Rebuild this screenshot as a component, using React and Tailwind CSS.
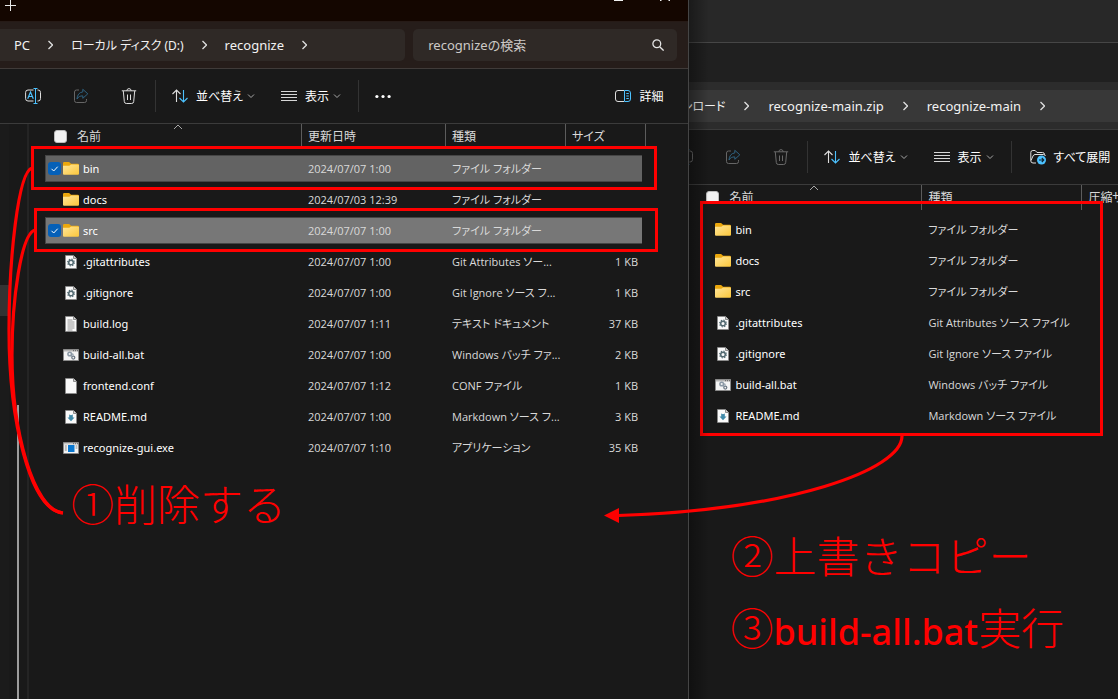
import React from "react";

const leftFiles = [
  { icon: "folder", name: "bin", date: "2024/07/07 1:00", kind: "ファイル フォルダー", size: "", tone: "bg-[#636363]" },
  { icon: "folder", name: "docs", date: "2024/07/03 12:39", kind: "ファイル フォルダー", size: "" },
  { icon: "folder", name: "src", date: "2024/07/07 1:00", kind: "ファイル フォルダー", size: "", tone: "bg-[#777777]" },
  { icon: "gear", name: ".gitattributes", date: "2024/07/07 1:00", kind: "Git Attributes ソー...", size: "1 KB" },
  { icon: "gear", name: ".gitignore", date: "2024/07/07 1:00", kind: "Git Ignore ソース フ...", size: "1 KB" },
  { icon: "text", name: "build.log", date: "2024/07/07 1:11", kind: "テキスト ドキュメント", size: "37 KB" },
  { icon: "bat", name: "build-all.bat", date: "2024/07/07 1:00", kind: "Windows バッチ ファ...", size: "2 KB" },
  { icon: "blank", name: "frontend.conf", date: "2024/07/07 1:12", kind: "CONF ファイル", size: "1 KB" },
  { icon: "markdown", name: "README.md", date: "2024/07/07 1:00", kind: "Markdown ソース フ...", size: "3 KB" },
  { icon: "exe", name: "recognize-gui.exe", date: "2024/07/07 1:10", kind: "アプリケーション", size: "35 KB" },
];

const rightFiles = [
  { icon: "folder", name: "bin", kind: "ファイル フォルダー" },
  { icon: "folder", name: "docs", kind: "ファイル フォルダー" },
  { icon: "folder", name: "src", kind: "ファイル フォルダー" },
  { icon: "gear", name: ".gitattributes", kind: "Git Attributes ソース ファイル" },
  { icon: "gear", name: ".gitignore", kind: "Git Ignore ソース ファイル" },
  { icon: "bat", name: "build-all.bat", kind: "Windows バッチ ファイル" },
  { icon: "markdown", name: "README.md", kind: "Markdown ソース ファイル" },
];

function Page({ short, children }) {
  return (
    <>
      <path d={short ? "M2.5 1.5h8l3 3v10h-11z" : "M2.5 .5h8l3 3v12h-11z"} fill="#fafafa" stroke="#8d8d8d" strokeWidth=".7" />
      <path d={short ? "M10.5 1.5v3h3" : "M10.5 .5v3h3"} fill="#d0d0d0" stroke="#777" strokeWidth=".8" />
      {children}
    </>
  );
}

function FileIcon({ type }) {
  return (
    <svg viewBox="0 0 16 16" className="size-4 shrink-0" aria-hidden="true">
      {type === "folder" && (
        <>
          <defs>
            <linearGradient id="folderFront" x1="0" y1="0" x2="1" y2="1">
              <stop offset="0" stopColor="#ffe69a" />
              <stop offset="1" stopColor="#fbc63a" />
            </linearGradient>
          </defs>
          <path d="M0 2.2Q0 1 1.2 1h4.6q.6 0 1 .4L8 2.7h6.8Q16 2.7 16 4v4H0z" fill="#eba70c" />
          <path d="M0 4.7h6.2q.5 0 .9-.4l.9-.9h7q1 0 1 1v8.400q0 1-1 1H1q-1 0-1-1z" fill="url(#folderFront)" />
        </>
      )}
      {type === "gear" && (
        <Page short>
          <circle cx="8" cy="8.5" r="2.3" fill="none" stroke="#536a72" strokeWidth="1.5" />
          <circle cx="8" cy="8.5" r="3.4" fill="none" stroke="#536a72" strokeWidth="1.1" strokeDasharray="1.35 1.32" />
        </Page>
      )}
      {type === "text" && (
        <Page>
          <path d="M4.5 4h5M4.5 6h7M4.5 8h7M4.5 10h7M4.5 12h7M4.5 14h5" stroke="#8a8a8a" strokeWidth=".9" />
        </Page>
      )}
      {type === "blank" && <Page />}
      {type === "markdown" && (
        <Page short>
          <path d="M6.2 5.500l1.800.8 1.800-.8v3h1.700L8 12.300 4.500 8.500h1.700z" fill="#3f89a8" />
        </Page>
      )}
      {type === "bat" && (
        <>
          <path d="M.5 2.5h15v11H.5z" fill="#f4f4f4" stroke="#8a8a8a" />
          <path d="M1 3h14v1.500H1z" fill="#b5b5b5" />
          <path d="M10 3.7h1M12 3.7h1M14 3.7h1" stroke="#555" strokeWidth=".9" />
          <circle cx="6.7" cy="7" r="1.8" fill="none" stroke="#8a98a5" strokeWidth="1.5" />
          <circle cx="10.3" cy="10.6" r="1.5" fill="none" stroke="#6e7a86" strokeWidth="1.3" />
          <path d="M8 8.300l1.300 1.300M9.500 6.500l.8 2" stroke="#8a98a5" strokeWidth="1.2" />
        </>
      )}
      {type === "exe" && (
        <>
          <path d="M.5 2.5h15v11H.5z" fill="#f4f4f4" stroke="#8a8a8a" />
          <path d="M1 3h14v1.500H1z" fill="#c4c4c4" />
          <path d="M10 3.7h1M12 3.7h1M14 3.7h1" stroke="#555" strokeWidth=".9" />
          <path d="M5 5h6.500v7H5z" fill="#0b78d0" />
          <path d="M1.800 6h2M1.800 8h2M1.800 10h2M12.600 6h1.800M12.600 8h1.800" stroke="#777" strokeWidth=".9" />
        </>
      )}
    </svg>
  );
}

function RenameIcon() {
  return (
    <svg viewBox="0 0 16 16" className="size-4" fill="none" aria-hidden="true">
      <path d="M8.500 2H3Q.6 2 .6 4.400v6.200Q.6 13 3 13h5.500M12.500 2h.6q2.400 0 2.400 2.400v6.200q0 2.400-2.400 2.400h-.6" stroke="#dedede" />
      <path d="M10.500 .5v15M8.500 .5h4M8.500 15.500h4" stroke="#4cc2ff" />
      <path d="M2.700 10.700L5.500 4l2.800 6.700M3.700 8.500h3.600" stroke="#4cc2ff" strokeWidth="1.2" />
    </svg>
  );
}

function ShareIcon() {
  return (
    <svg viewBox="0 0 16 16" className="size-4" fill="none" aria-hidden="true">
      <path d="M6 2H3.500Q1.500 2 1.500 4v8.500q0 2 2 2h8q2 0 2-2V11" stroke="#666" />
      <path d="M9.800 1.300l5 4.500-5 4.500V7.900C7 7.800 5.300 8.800 4 11c.2-4 2.200-6.700 5.800-7.100z" stroke="#2f6280" strokeLinejoin="round" />
    </svg>
  );
}

function TrashIcon() {
  return (
    <svg viewBox="0 0 16 16" className="size-4" fill="none" stroke="currentColor" aria-hidden="true">
      <path d="M.8 2.800h14.400M5.800 2.800Q6 .6 8 .6t2.200 2.200M2.300 3l1 10.500q.2 2 2 2h5.400q1.800 0 2-2l1-10.500M6.500 6.500v5.500M9.500 6.500v5.500" />
    </svg>
  );
}

function SortIcon() {
  return (
    <svg viewBox="0 0 16 16" className="size-4" fill="none" strokeWidth="1.1" aria-hidden="true">
      <path d="M4.500 14V2.200M.5 6l4-4 4 4" stroke="#dedede" />
      <path d="M11.500 2v11.800M7.500 10l4 4 4-4" stroke="#4cc2ff" />
    </svg>
  );
}

function ListIcon() {
  return (
    <svg viewBox="0 0 16 16" className="size-4" stroke="#d6d6d6" aria-hidden="true">
      <path d="M0 3.500h16M0 6.500h16M0 9.500h16M0 12.500h16" />
    </svg>
  );
}

function ChevronDown() {
  return (
    <svg viewBox="0 0 8 8" className="-ml-1 size-2" fill="none" stroke="#a8a8a8" aria-hidden="true">
      <path d="M1 2.500l3 3 3-3" />
    </svg>
  );
}

function ChevronRight() {
  return (
    <svg viewBox="0 0 5 10" className="h-2.5 w-[5px] shrink-0" fill="none" stroke="#e0e0e0" strokeWidth="1.3" aria-hidden="true">
      <path d="M.5 1l4 4-4 4" />
    </svg>
  );
}

function Separator() {
  return <span className="h-8 w-px shrink-0 bg-[#333]" />;
}

/* Commands that both windows have, in the same order. */
function CommandBar({ disabled, children }) {
  return (
    <div className="flex h-[55px] items-center border-b border-[#3b3b3b] bg-[#191919] pl-[25px] text-xs text-white">
      <button aria-label="名前の変更" disabled={disabled} className={disabled ? "opacity-40" : ""}><RenameIcon /></button>
      <button aria-label="共有" disabled className="ml-8"><ShareIcon /></button>
      <button aria-label="削除" disabled={disabled} className={disabled ? "ml-8 text-[#6a6a6a]" : "ml-8 text-[#dedede]"}><TrashIcon /></button>
      <span className="ml-[18px] flex"><Separator /></span>
      <button className="ml-4 flex items-center gap-2 whitespace-nowrap">
        <SortIcon /><span className="pt-0.5">並べ替え</span><ChevronDown />
      </button>
      <button className="ml-[26px] flex items-center gap-2 whitespace-nowrap">
        <ListIcon /><span className="pt-0.5">表示</span><ChevronDown />
      </button>
      <span className="ml-[17px] flex"><Separator /></span>
      {children}
    </div>
  );
}

function HeaderCell({ children, last }) {
  return (
    <div className={`flex h-[25px] items-center overflow-hidden pl-[6px] whitespace-nowrap ${last ? "" : "border-r border-[#5c5c5c]"}`}>
      {children}
    </div>
  );
}

function NameHeader() {
  return (
    <div className="relative flex h-[25px] items-center gap-[10px] border-r border-[#5c5c5c] pl-[9px]">
      <input type="checkbox" aria-label="すべて選択" className="size-[13px] appearance-none rounded-[3px] border border-[#bdbdbd] bg-[#f3f3f3]" />
      <span>名前</span>
      <svg viewBox="0 0 10 6" className="absolute top-0 left-1/2 h-1.5 w-2.5" fill="none" stroke="#a8a8a8" aria-hidden="true">
        <path d="M1 5l4-4 4 4" />
      </svg>
    </div>
  );
}

function NameCell({ file }) {
  return (
    <div className={`flex h-[27px] items-center text-white ${file.tone ? `${file.tone} border border-r-0 border-[#454545] pl-[2px]` : "pl-[3px]"}`}>
      {file.tone ? (
        <span className="relative flex size-[13px]">
          <input type="checkbox" defaultChecked aria-label={file.name} className="size-[13px] appearance-none rounded-[3px] bg-[#0560b8]" />
          <svg viewBox="0 0 13 13" className="pointer-events-none absolute inset-0" fill="none" stroke="#fff" aria-hidden="true">
            <path d="M3.500 6.800l2.200 2.200 4-4.300" />
          </svg>
        </span>
      ) : (
        <span className="size-[13px]" />
      )}
      <span className="ml-0.5 flex"><FileIcon type={file.icon} /></span>
      <span className="ml-1 pt-0.5 font-['Noto_Sans','Noto_Sans_CJK_JP',sans-serif] whitespace-nowrap">{file.name}</span>
    </div>
  );
}

function Cell({ tone, end, children }) {
  return (
    <div className={`flex h-[27px] items-center pt-0.5 whitespace-nowrap ${end ? "justify-end pr-1" : "pl-[6px]"} ${tone ? `${tone} border-y border-[#454545]` : ""}`}>
      {children}
    </div>
  );
}

function LeftTable() {
  return (
    <table className="ml-4 w-[601px] table-fixed border-collapse text-[11px] text-[#d9d9d9]">
      <colgroup>
        <col className="w-[257px]" />
        <col className="w-[144px]" />
        <col className="w-[120px]" />
        <col className="w-[76px]" />
        <col className="w-[4px]" />
      </colgroup>
      <thead className="text-xs">
        <tr className="h-[29px] text-left align-top">
          <th className="p-0 font-normal"><NameHeader /></th>
          <th className="p-0 font-normal"><HeaderCell>更新日時</HeaderCell></th>
          <th className="p-0 font-normal"><HeaderCell>種類</HeaderCell></th>
          <th colSpan={2} className="p-0 font-normal"><HeaderCell>サイズ</HeaderCell></th>
        </tr>
      </thead>
      <tbody>
        {leftFiles.map((f) => (
          <tr key={f.name} className="h-[31px]">
            <td className="p-0"><NameCell file={f} /></td>
            <td className="p-0"><Cell tone={f.tone}>{f.date}</Cell></td>
            <td className="p-0"><Cell tone={f.tone}>{f.kind}</Cell></td>
            <td className="p-0"><Cell tone={f.tone} end>{f.size}</Cell></td>
            <td className="p-0" />
          </tr>
        ))}
      </tbody>
    </table>
  );
}

function RightTable() {
  return (
    <table className="w-full table-fixed border-collapse text-[11px] text-[#d9d9d9]">
      <colgroup>
        <col className="w-[225px]" />
        <col className="w-[160px]" />
        <col />
      </colgroup>
      <thead className="text-xs">
        <tr className="h-[29px] text-left align-top">
          <th className="p-0 font-normal"><NameHeader /></th>
          <th className="p-0 font-normal"><HeaderCell>種類</HeaderCell></th>
          <th className="p-0 font-normal"><HeaderCell last>圧縮サイズ</HeaderCell></th>
        </tr>
      </thead>
      <tbody>
        {rightFiles.map((f) => (
          <tr key={f.name} className="h-[31px]">
            <td className="p-0"><NameCell file={f} /></td>
            <td className="p-0"><Cell>{f.kind}</Cell></td>
            <td className="p-0" />
          </tr>
        ))}
      </tbody>
    </table>
  );
}

const note = "absolute whitespace-nowrap font-['Noto_Sans_CJK_JP',sans-serif] text-[43px] leading-[72px] font-light text-[#ff0000] [font-feature-settings:normal]";

function LeftWindow() {
  return (
    <section className="relative z-10 flex min-w-0 flex-[689] flex-col border-r border-[#454545] bg-[#191919]">
      <div className="flex h-[22px] items-start justify-between border-b border-[#261a16] bg-[#140600]">
        <button aria-label="新しいタブ" className="ml-[5px]">
          <svg viewBox="0 0 11 11" className="size-[11px]" stroke="#e8e8e8" aria-hidden="true">
            <path d="M0 5.500h11M5.500 0v11" />
          </svg>
        </button>
        <svg viewBox="0 0 60 2" className="mr-[16px] h-0.5 w-[60px]" fill="#f0f0f0" aria-hidden="true">
          <path d="M2 0h9v1H2zM48 0h1.500v1H48zM56.500 0h1.500v1h-1.500z" />
        </svg>
      </div>
      <div className="grid h-[47px] grid-cols-[405fr_264fr] items-center gap-2 border-b border-[#403b39] bg-[#261d1a] pr-[11px] font-['Noto_Sans','Noto_Sans_CJK_JP',sans-serif] text-[13px] text-[#f2f2f2]">
        <nav aria-label="アドレス" className="flex h-8 items-center gap-[18px] rounded-r-[5px] bg-[#2f2926] pl-[14px] whitespace-nowrap">
          <button className="pt-0.5">PC</button>
          <ChevronRight />
          <button className="pt-0.5 text-xs">ローカル ディスク (D:)</button>
          <ChevronRight />
          <button className="pt-0.5">recognize</button>
          <ChevronRight />
        </nav>
        <label className="flex h-8 items-center rounded-[5px] bg-[#2f2926] pr-[13px] pl-[15px]">
          <input type="text" aria-label="検索" placeholder="recognizeの検索" className="min-w-0 flex-1 bg-transparent pt-0.5 outline-none placeholder:text-[#cdc9c7]" />
          <svg viewBox="0 0 12 12" className="size-3" fill="none" stroke="#e4e4e4" strokeWidth="1.3" aria-hidden="true">
            <circle cx="4.8" cy="4.8" r="3.9" />
            <path d="M7.700 7.700l3.900 3.900" />
          </svg>
        </label>
      </div>
      <CommandBar>
        <button aria-label="もっと見る" className="ml-4">
          <svg viewBox="0 0 16 16" className="size-4" fill="#fff" aria-hidden="true">
            <circle cx="1.9" cy="8.5" r="1.6" />
            <circle cx="8" cy="8.5" r="1.6" />
            <circle cx="14.1" cy="8.5" r="1.6" />
          </svg>
        </button>
        <button className="mr-[25px] ml-auto flex items-center gap-2">
          <svg viewBox="0 0 16 16" className="size-4" fill="none" aria-hidden="true">
            <path d="M9 2.500H3Q.5 2.500 .5 5v6Q.5 13.500 3 13.500h6" stroke="#dedede" />
            <path d="M9.500 2.500H13q2.500 0 2.500 2.500v6q0 2.500-2.500 2.500H9.500zM11.300 5.500h2.500M11.300 8h2.500M11.300 10.500h2.500" stroke="#4cc2ff" />
          </svg>
          <span className="pt-0.5">詳細</span>
        </button>
      </CommandBar>
      <div className="relative flex flex-1">
        <aside className="flex w-[29px] shrink-0 border-r-2 border-[#242424]">
          <div className="w-[9px] bg-[#1b1b1b] pt-[161px]">
            <div className="h-[31px] bg-[#333]" />
          </div>
          <div className="ml-2 pt-[281px]">
            <div className="h-full w-0.5 bg-[#9d9d9d]" />
          </div>
        </aside>
        <div className="min-w-0 flex-1"><LeftTable /></div>

        <div className="absolute top-[22px] left-[31px] h-[44px] w-[626px] border-3 border-[#ff0000]" />
        <div className="absolute top-[84px] left-[34px] h-[44px] w-[624px] border-3 border-[#ff0000]" />
        <svg viewBox="0 0 70 400" className="absolute top-0 left-0 h-[400px] w-[70px]" fill="none" stroke="#f00" strokeWidth="3.2" aria-hidden="true">
          <path d="M32 44C18 48 9 136 9 206C9 296 30 386 63 389" />
          <path d="M35 106C21 110 12 176 12 231C12 306 33 386 63 389" />
        </svg>
        <p className={`${note} top-[342px] left-[71px]`}>①削除する</p>
      </div>
    </section>
  );
}

function RightWindow() {
  return (
    <section className="relative min-w-0 flex-[429] overflow-hidden bg-[#191919]">
      <div className="-ml-[37px] flex flex-col">
        <div className="h-[43px] border-b border-[#464646] bg-[#282828]" />
        <div className="h-[39px] bg-[#202020]" />
        <div className="flex h-12 items-center border-b border-[#3b3b3b] bg-[#2c2c2c] font-['Noto_Sans','Noto_Sans_CJK_JP',sans-serif] text-[13px] text-[#f2f2f2]">
          <nav aria-label="アドレス" className="flex h-8 flex-1 items-center gap-[19px] bg-[#383838] whitespace-nowrap">
            <button className="w-[73px] pt-0.5 text-right text-xs">ンロード</button>
            <ChevronRight />
            <button className="pt-0.5">recognize-main.zip</button>
            <ChevronRight />
            <button className="pt-0.5">recognize-main</button>
            <ChevronRight />
          </nav>
        </div>
        <CommandBar disabled>
          <button className="ml-[18px] flex items-center gap-2 whitespace-nowrap">
            <svg viewBox="0 0 16 16" className="size-4" fill="none" aria-hidden="true">
              <path d="M6 14H3Q.8 14 .8 11.800V3.500Q.8 1.500 2.800 1.500h2.400L7 3.500h5.500q2 0 2 2M1 11.500L3 7Q3.700 5.500 5 5.500h8.500q2 0 1.800 1.500" stroke="#dedede" />
              <circle cx="11.5" cy="11" r="4.5" fill="#4cc2ff" />
              <path d="M9 11h4.600M11.800 9l2 2-2 2" stroke="#10222e" strokeWidth="1.1" />
            </svg>
            <span className="pt-0.5">すべて展開</span>
          </button>
        </CommandBar>
      </div>
      <div className="relative pl-2">
        <RightTable />
        <div className="absolute top-[16px] left-[11px] h-[235px] w-[403px] border-3 border-[#ff0000]" />
        <p className={`${note} top-[333px] left-[41px]`}>②上書きコピー</p>
        <p className={`${note} top-[405px] left-[41px]`}>
          ③<span className="font-['Noto_Sans',sans-serif] text-[36px] font-medium">build-all.bat</span>実行
        </p>
      </div>
      <div className="pointer-events-none absolute inset-y-0 left-0 w-5 bg-linear-to-r from-black/35 to-transparent" />
    </section>
  );
}

export default function App() {
  return (
    <main className="relative flex min-h-screen overflow-hidden bg-[#191919] font-['Open_Sans','Noto_Sans_CJK_JP',sans-serif] [font-feature-settings:'palt']">
      <LeftWindow />
      <RightWindow />
      <svg viewBox="0 0 310 100" className="absolute top-[430px] left-[600px] z-20 h-[100px] w-[310px]" fill="none" aria-hidden="true">
        <path d="M302 6C302 40 190 80 18 85.500" stroke="#f00" strokeWidth="3.2" />
        <path d="M4 85.500L19 78v15z" fill="#f00" />
      </svg>
    </main>
  );
}
